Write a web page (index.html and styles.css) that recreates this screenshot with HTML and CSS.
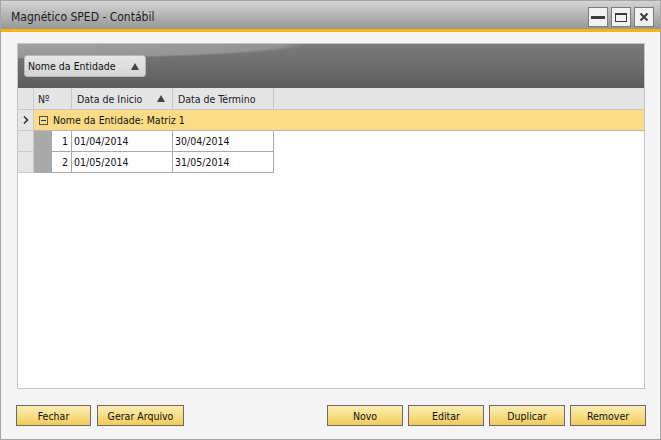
FILE: index.html
```html
<!DOCTYPE html>
<html lang="pt">
<head>
  <meta charset="UTF-8" />
  <title>Magnético SPED - Contábil</title>
  <link rel="stylesheet" href="styles.css">
</head>
<body>
  <div class="window">
    <div class="titlebar">
      <span class="title">Magnético SPED - Contábil</span>
      <div class="win-controls">
        <span class="win-btn">
          <svg width="18" height="18" viewBox="0 0 18 18"><rect x="2" y="8" width="14" height="3" fill="#3a3a3a"/></svg>
        </span>
        <span class="win-btn">
          <svg width="18" height="18" viewBox="0 0 18 18"><rect x="3.5" y="5.5" width="11" height="8" fill="none" stroke="#3a3a3a" stroke-width="1"/><rect x="3" y="5" width="12" height="2" fill="#3a3a3a"/></svg>
        </span>
        <span class="win-btn">
          <svg width="18" height="18" viewBox="0 0 18 18"><path d="M5.5 5.5 L12.5 12.5 M12.5 5.5 L5.5 12.5" stroke="#3a3a3a" stroke-width="2"/></svg>
        </span>
      </div>
    </div>
    <div class="accent"></div>

    <div class="content">
      <div class="grid">
        <div class="group-area">
          <div class="group-chip">
            Nome da Entidade
            <svg class="tri" width="8" height="7" viewBox="0 0 8 7"><polygon points="4,0 8,7 0,7" fill="#444"/></svg>
          </div>
        </div>

        <div class="row head">
          <div class="cell ind"></div>
          <div class="cell num">Nº</div>
          <div class="cell date">Data de Inicio
            <svg class="tri" width="8" height="7" viewBox="0 0 8 7"><polygon points="4,0 8,7 0,7" fill="#444"/></svg>
          </div>
          <div class="cell date">Data de Término</div>
          <div class="cell fill"></div>
        </div>

        <div class="row group">
          <div class="cell ind">
            <svg width="6" height="8" viewBox="0 0 6 8"><path d="M1 0.5 L4.5 4 L1 7.5" fill="none" stroke="#333" stroke-width="1.6"/></svg>
          </div>
          <div class="cell group-label">
            <span class="expander"></span>
            Nome da Entidade: Matriz 1
          </div>
        </div>

        <div class="row data">
          <div class="cell ind"></div>
          <div class="cell num">1</div>
          <div class="cell date">01/04/2014</div>
          <div class="cell date">30/04/2014</div>
          <div class="cell fill"></div>
        </div>
        <div class="row data">
          <div class="cell ind"></div>
          <div class="cell num">2</div>
          <div class="cell date">01/05/2014</div>
          <div class="cell date">31/05/2014</div>
          <div class="cell fill"></div>
        </div>
      </div>

      <div class="actions">
        <div class="btn-group">
          <button class="btn">Fechar</button>
          <button class="btn wide">Gerar Arquivo</button>
        </div>
        <div class="btn-group right">
          <button class="btn">Novo</button>
          <button class="btn">Editar</button>
          <button class="btn">Duplicar</button>
          <button class="btn">Remover</button>
        </div>
      </div>
    </div>
  </div>
</body>
</html>
```

FILE: styles.css
```css
body {
  margin: 0;
  padding: 0;
  font-family: "DejaVu Sans Condensed", "DejaVu Sans", sans-serif;
  font-stretch: condensed;
  font-size: 10.5px;
  color: #111;
  background: #f4f4f4;
}

.window {
  width: 661px;
  height: 440px;
  box-sizing: border-box;
  border: 1px solid #a4a4a4;
  background: #f4f4f4;
  display: flex;
  flex-direction: column;
}

.titlebar {
  height: 28px;
  display: flex;
  align-items: center;
  justify-content: space-between;
  padding: 0 6px 0 10px;
  background: linear-gradient(#d4d4d4, #bfbfbf 35%, #a5a5a5 75%, #989898);
}

.title {
  font-size: 12px;
  color: #1c1c1c;
  margin-top: 4px;
}

.win-controls {
  display: flex;
  gap: 3px;
  margin-top: 4px;
}

.win-btn {
  width: 20px;
  height: 20px;
  box-sizing: border-box;
  border: 1px solid #7c7c7c;
  background: #f1f1f1;
  display: flex;
  align-items: center;
  justify-content: center;
}

.accent {
  height: 3px;
  background: #fbb800;
}

.content {
  flex: 1;
  padding: 11px 15px 0 16px;
}

.grid {
  height: 346px;
  box-sizing: border-box;
  border: 1px solid #c4c4c4;
  background: #fff;
}

.group-area {
  height: 44px;
  box-sizing: border-box;
  padding: 11px 0 0 6px;
  background:
    radial-gradient(ellipse 290px 15px at 0 0, #a2a2a2 0%, #949494 90%, transparent 100%),
    linear-gradient(#7b7b7b, #6b6b6b 55%, #5c5c5c);
}

.group-chip {
  width: 122px;
  height: 22px;
  box-sizing: border-box;
  border: 1px solid #b8b8b8;
  border-radius: 3px;
  background: linear-gradient(#e6e6e6, #d4d4d4);
  color: #111;
  display: flex;
  align-items: center;
  padding: 0 0 0 3px;
}

.group-chip .tri {
  margin-left: 15px;
}

.row {
  display: flex;
}

.cell {
  box-sizing: border-box;
  height: 21px;
  display: flex;
  align-items: center;
  white-space: nowrap;
}

.cell.ind {
  width: 16px;
  background: #e5e5e5;
  border-right: 1px solid #cbcbcb;
  border-bottom: 1px solid #cbcbcb;
  justify-content: center;
}

.head .cell {
  height: 22px;
  background: #e4e4e4;
  border-bottom: 1px solid #c6c6c6;
  color: #1a1a1a;
}

.head .num {
  width: 38px;
  padding-left: 4px;
  border-right: 1px solid #c6c6c6;
}

.head .date {
  width: 101px;
  padding-left: 5px;
  border-right: 1px solid #c6c6c6;
}

.head .date .tri {
  margin-left: auto;
  margin-right: 7px;
}

.head .fill {
  flex: 1;
}

.group .group-label {
  flex: 1;
  background: #fbdb86;
  border-bottom: 1px solid #b8b8b8;
  padding-left: 5px;
}

.expander {
  width: 9px;
  height: 9px;
  box-sizing: border-box;
  border: 1px solid #555;
  margin-right: 5px;
  position: relative;
}

.expander::after {
  content: "";
  position: absolute;
  left: 1px;
  top: 3px;
  width: 5px;
  height: 1px;
  background: #333;
}

.data .num {
  width: 38px;
  justify-content: flex-end;
  padding-right: 3px;
  background: linear-gradient(90deg, #a9a9a9 18px, #fff 18px);
  border-right: 1px solid #a9a9a9;
  border-bottom: 1px solid #a9a9a9;
}

.data .date {
  width: 101px;
  padding-left: 2px;
  border-right: 1px solid #a9a9a9;
  border-bottom: 1px solid #a9a9a9;
}

.data .fill {
  flex: 1;
}

.actions {
  display: flex;
  justify-content: space-between;
  margin: 16px -1px 0 -1px;
}

.btn-group {
  display: flex;
  gap: 6px;
}

.btn-group.right {
  gap: 5px;
}

.btn {
  width: 75px;
  height: 21px;
  box-sizing: border-box;
  border: 1px solid #6a6a6a;
  background: linear-gradient(#fcedb3, #f7de88 50%, #f0cb58);
  font-family: inherit;
  font-stretch: condensed;
  font-size: 10.5px;
  color: #111;
  padding: 0;
}

.right .btn {
  width: 76px;
}

.btn.wide {
  width: 87px;
}
```
